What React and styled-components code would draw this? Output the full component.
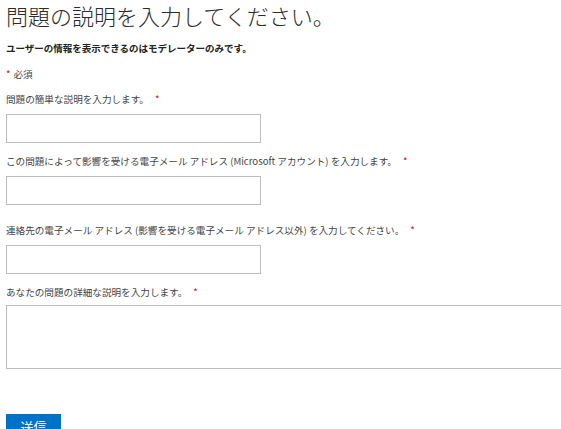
import React from "react";
import styled, { createGlobalStyle } from "styled-components";

const Global = createGlobalStyle`
  html, body { margin: 0; padding: 0; background: #fff; }
  body { font-family: "Noto Sans CJK JP", "Noto Sans", sans-serif; overflow: hidden; }
`;

const Page = styled.form`
  padding-left: 6px;
  display: flex;
  flex-direction: column;
  align-items: flex-start;
`;

const Title = styled.h1`
  margin: 0;
  font-size: 22px;
  line-height: 30px;
  font-weight: 300;
  color: #2b2b2b;
`;

const Notice = styled.p`
  margin: 11px 0 0;
  font-size: 9.5px;
  line-height: 14px;
  font-weight: 700;
  color: #222;
`;

const Label = styled.label`
  margin-top: ${(p) => p.$top}px;
  font-size: 9.6px;
  line-height: 14px;
  color: #444;
  display: block;
`;

const Star = styled.span`
  color: #d01010;
  margin: ${(p) => (p.$lead ? "0 3px 0 0" : "0 0 0 6px")};
`;

const Input = styled.input`
  box-sizing: border-box;
  margin-top: ${(p) => p.$top}px;
  width: 255px;
  height: 29px;
  border: 1px solid #bcbcbc;
  background: #fff;
  padding: 0 6px;
  outline: none;
`;

const TextArea = styled.textarea`
  box-sizing: border-box;
  margin-top: 6px;
  width: 580px;
  height: 64px;
  border: 1px solid #bcbcbc;
  resize: none;
  outline: none;
`;

const Submit = styled.button`
  margin-top: 45px;
  width: 55px;
  height: 26px;
  border: none;
  background: #0072c6;
  color: #fff;
  font-family: "Noto Sans CJK JP", sans-serif;
  font-size: 13px;
  line-height: 26px;
  padding: 0;
  padding-bottom: 8px;
  text-align: center;
`;

const fields = [
  { label: "問題の簡単な説明を入力します。", top: 11 },
  { label: "この問題によって影響を受ける電子メール アドレス (Microsoft アカウント) を入力します。", top: 11 },
  { label: "連絡先の電子メール アドレス (影響を受ける電子メール アドレス以外) を入力してください。", top: 18 },
];

export default function App() {
  return (
    <>
      <Global />
      <Page onSubmit={(e) => e.preventDefault()}>
        <Title>問題の説明を入力してください。</Title>
        <Notice>ユーザーの情報を表示できるのはモデレーターのみです。</Notice>
        <Label $top={12}>
          <Star $lead>*</Star>必須
        </Label>
        {fields.map((f, i) => (
          <React.Fragment key={i}>
            <Label $top={f.top}>
              {f.label}
              <Star>*</Star>
            </Label>
            <Input $top={8} type="text" />
          </React.Fragment>
        ))}
        <Label $top={11}>
          あなたの問題の詳細な説明を入力します。<Star>*</Star>
        </Label>
        <TextArea />
        <Submit type="submit">送信</Submit>
      </Page>
    </>
  );
}
